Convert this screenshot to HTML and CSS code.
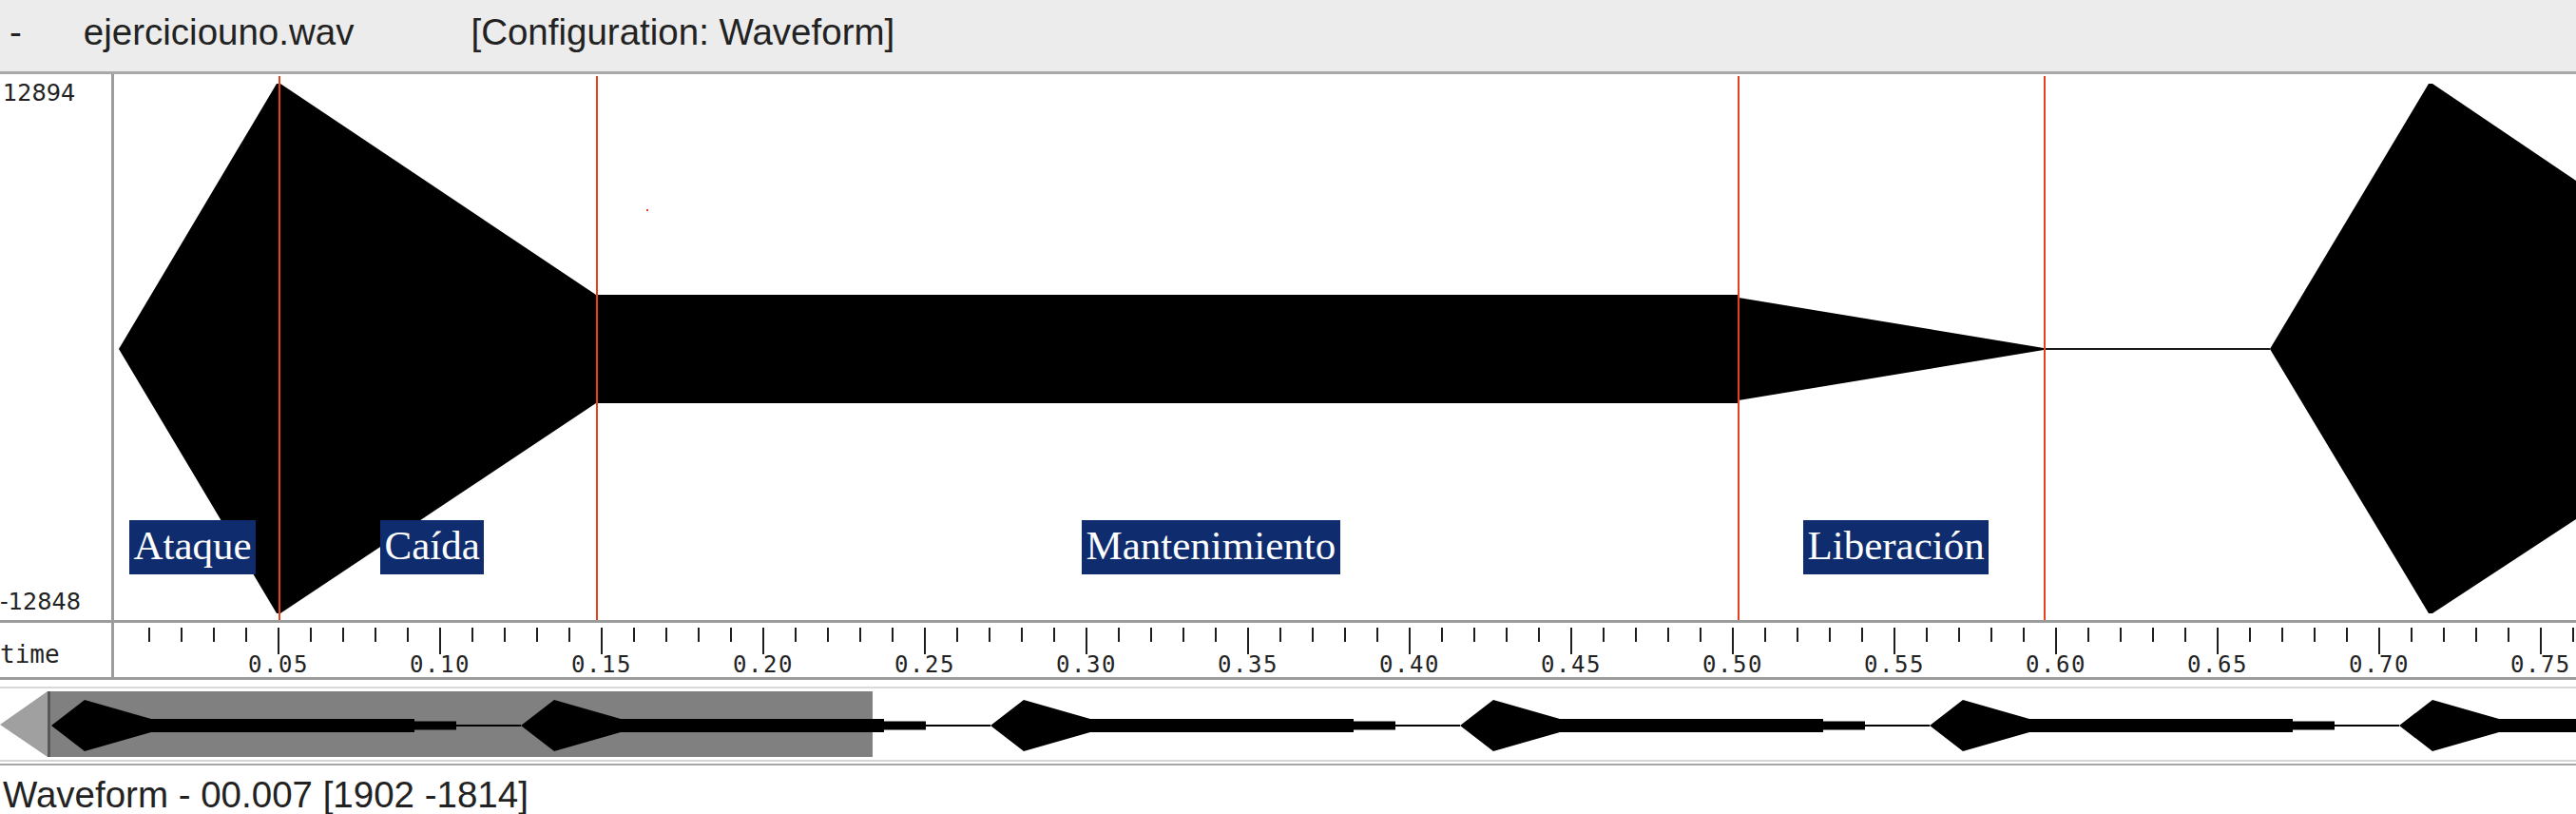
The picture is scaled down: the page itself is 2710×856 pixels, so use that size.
FILE: index.html
```html
<!DOCTYPE html>
<html lang="es">
<head>
<meta charset="utf-8">
<title>ejerciciouno.wav - Waveform</title>
<link rel="stylesheet" href="styles.css">
</head>
<body>
<div class="app">
  <header class="titlebar">
    <span class="dash">-</span>
    <span class="filename">ejerciciouno.wav</span>
    <span class="config">[Configuration: Waveform]</span>
  </header>

  <section class="panel">
    <div class="axis">
      <span class="axis-max">12894</span>
      <span class="axis-min">-12848</span>
    </div>
    <div class="plot">
      <svg class="wave" viewBox="120 78 2590 574" width="2590" height="574" xmlns="http://www.w3.org/2000/svg">
        <polygon fill="#000" points="125,367 291,88 295,88 627,310 1829,310 1829,313 2150,366 2150,368 1829,421 1829,424 627,424 295,645 291,645"/>
        <rect x="2150" y="366" width="238" height="2" fill="#1a1a1a"/>
        <polygon fill="#000" points="2388,367 2555,88 2559,88 2710,190 2710,546 2559,645 2555,645"/>
        <g fill="#e8401f">
          <rect x="293" y="80" width="2" height="572"/>
          <rect x="627" y="80" width="2" height="572"/>
          <rect x="1828" y="80" width="2" height="572"/>
          <rect x="2150" y="80" width="2" height="572"/>
          <rect x="680" y="220" width="2" height="2"/>
        </g>
      </svg>
      <span class="tag tag-ataque">Ataque</span>
      <span class="tag tag-caida">Caída</span>
      <span class="tag tag-mant">Mantenimiento</span>
      <span class="tag tag-lib">Liberación</span>
    </div>
  </section>

  <section class="ruler">
    <div class="ruler-label">time</div>
    <div class="scale">
      <span>0.05</span><span>0.10</span><span>0.15</span><span>0.20</span><span>0.25</span>
      <span>0.30</span><span>0.35</span><span>0.40</span><span>0.45</span><span>0.50</span>
      <span>0.55</span><span>0.60</span><span>0.65</span><span>0.70</span><span class="last">0.75</span>
    </div>
  </section>

  <section class="overview">
    <svg class="mini" viewBox="0 724 2710 75" width="2710" height="75" xmlns="http://www.w3.org/2000/svg">
      <defs>
        <g id="cycle" fill="#000">
          <polygon points="0,763 35,736 105,756 382,756 382,758.5 426,758.5 426,767.5 382,767.5 382,770 105,770 35,790"/>
          <rect x="426" y="762" width="68" height="2"/>
        </g>
      </defs>
      <polygon points="0,762 50,727 50,796" fill="#a0a0a0"/>
      <rect x="50" y="727" width="868" height="69" fill="#808080"/>
      <rect x="50" y="727" width="3" height="69" fill="#585858"/>
      <use href="#cycle" x="54"/>
      <use href="#cycle" x="548"/>
      <use href="#cycle" x="1042"/>
      <use href="#cycle" x="1536"/>
      <use href="#cycle" x="2030"/>
      <use href="#cycle" x="2524"/>
    </svg>
  </section>

  <footer class="status">Waveform - 00.007 [1902 -1814]</footer>
</div>
</body>
</html>
```

FILE: styles.css
```css
* {
  box-sizing: border-box;
}

html,
body {
  margin: 0;
  padding: 0;
}

body {
  width: 2710px;
  height: 856px;
  overflow: hidden;
  background: #ffffff;
  font-family: "Liberation Sans", Arial, sans-serif;
  color: #1c1c1c;
}

.app {
  display: flex;
  flex-direction: column;
  width: 2710px;
  height: 856px;
}

/* ---------- title bar ---------- */
.titlebar {
  flex: none;
  height: 78px;
  display: flex;
  align-items: flex-start;
  padding: 12px 0 0 10px;
  background: #ececec;
  border-bottom: 3px solid #a9a9a9;
  font-size: 38.5px;
  line-height: 44px;
  white-space: nowrap;
  color: #222222;
}

.filename {
  margin-left: 65px;
}

.config {
  margin-left: 123px;
}

/* ---------- waveform panel ---------- */
.panel {
  flex: none;
  display: flex;
  height: 577px;
  border-bottom: 3px solid #9c9c9c;
}

.axis {
  flex: none;
  width: 120px;
  display: flex;
  flex-direction: column;
  justify-content: space-between;
  padding: 6px 0 5px 0;
  border-right: 3px solid #9c9c9c;
  font-family: "DejaVu Sans", sans-serif;
  font-size: 24px;
  line-height: 28px;
  color: #222222;
}

.axis-max {
  margin-left: 3px;
}

.plot {
  position: relative;
  flex: 1;
  overflow: hidden;
}

.wave {
  display: block;
}

.tag {
  position: absolute;
  top: 469px;
  height: 57px;
  padding: 0 4.5px;
  background: #0f2d6e;
  color: #ffffff;
  font-family: "Liberation Serif", "Times New Roman", serif;
  font-size: 43px;
  line-height: 53px;
  white-space: nowrap;
}

.tag-ataque {
  left: 16px;
}

.tag-caida {
  left: 280px;
}

.tag-mant {
  left: 1018px;
}

.tag-lib {
  left: 1777px;
}

/* ---------- time ruler ---------- */
.ruler {
  flex: none;
  display: flex;
  height: 60px;
  border-bottom: 3px solid #9c9c9c;
}

.ruler-label {
  flex: none;
  width: 120px;
  padding-top: 18px;
  border-right: 3px solid #9c9c9c;
  font-family: "DejaVu Sans Mono", monospace;
  font-size: 26px;
  line-height: 30px;
  color: #222222;
}

.scale {
  flex: 1;
  min-width: 0;
  display: flex;
  align-items: flex-start;
  padding: 32px 0 0 88px;
  background-image:
    repeating-linear-gradient(90deg, #1e1e1e 0 2px, transparent 2px 34px),
    repeating-linear-gradient(90deg, #1e1e1e 0 2px, transparent 2px 170px);
  background-size: 100% 15px, 100% 28px;
  background-position: 36px 5px, 172px 5px;
  background-repeat: no-repeat;
}

.scale span {
  flex: none;
  width: 170px;
  text-align: center;
  font-family: "DejaVu Sans Mono", monospace;
  font-size: 24px;
  line-height: 25px;
  letter-spacing: 1.5px;
  color: #222222;
}

.scale .last {
  width: 70px;
  text-align: left;
  padding-left: 53px;
  white-space: nowrap;
  width: auto;
}

/* ---------- overview strip ---------- */
.overview {
  flex: none;
  height: 79px;
  margin-top: 7px;
  border-top: 2px solid #d9d9d9;
  border-bottom: 2px solid #d4d4d4;
}

.mini {
  display: block;
}

/* ---------- status bar ---------- */
.status {
  flex: 1;
  margin-top: 2px;
  padding: 9px 0 0 3px;
  border-top: 2px solid #a6a6a6;
  font-size: 38.5px;
  line-height: 44px;
  white-space: nowrap;
  color: #222222;
}
```
